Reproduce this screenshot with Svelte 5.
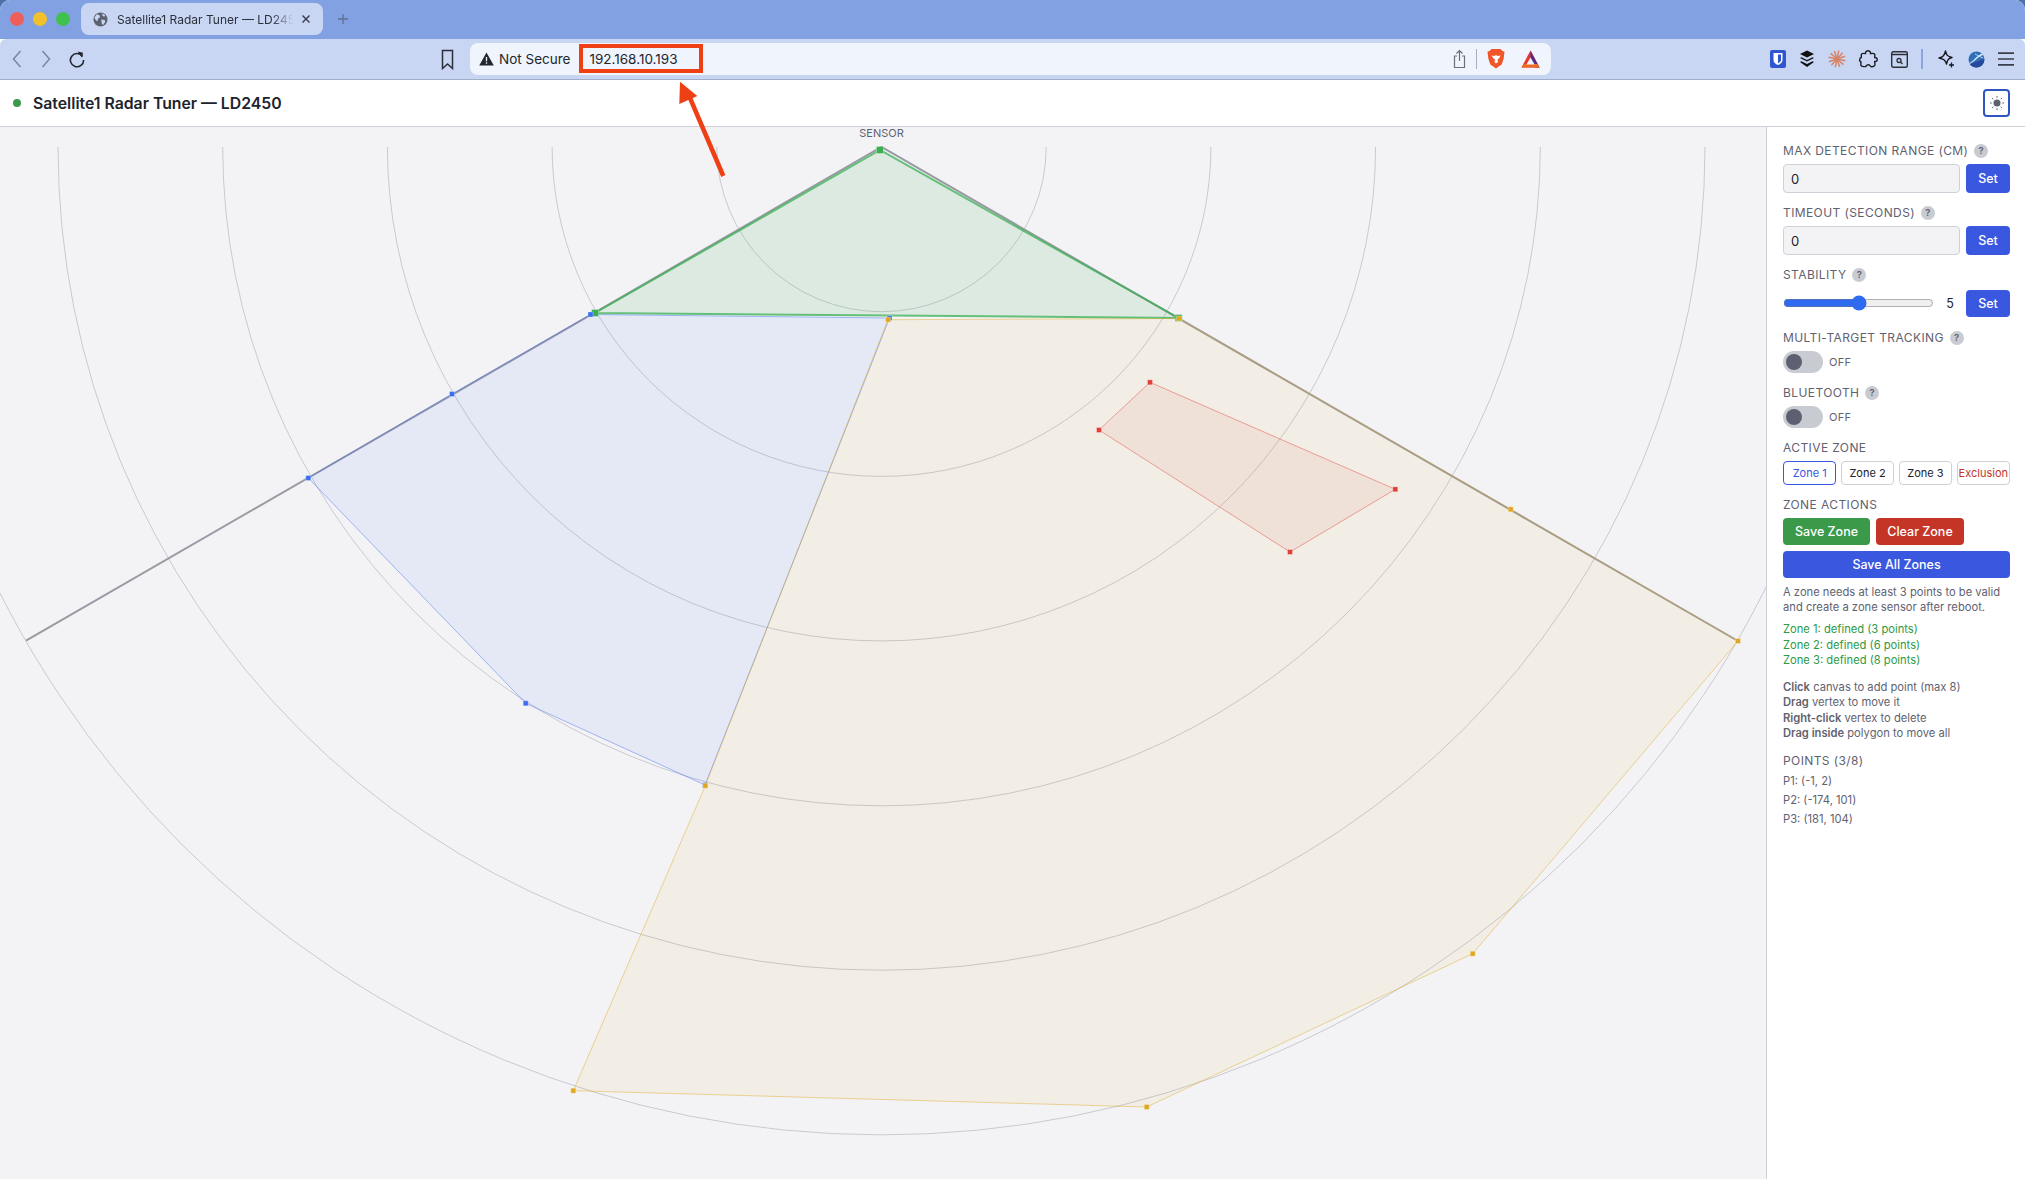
<script lang="ts">
	const cx = 881.5;
	const cy = 147;
	const rings = [1, 2, 3, 4, 5, 6].map((k) => k * 164.7);

	const zones = [
		{
			color: '#38b050',
			fill: 0.12,
			stroke: 2,
			strokeAlpha: 0.75,
			size: 7,
			points: [[880, 150], [595, 313], [1178.7, 318]]
		},
		{
			color: '#3b6ef0',
			fill: 0.08,
			stroke: 1,
			strokeAlpha: 0.45,
			size: 5,
			points: [[590.5, 314.5], [452, 394], [308.3, 478], [525.7, 703.3], [705, 785], [889.5, 318]]
		},
		{
			color: '#e0a820',
			fill: 0.08,
			stroke: 1,
			strokeAlpha: 0.45,
			size: 5,
			points: [[888, 319.7], [1179, 318.5], [1510.7, 509.3], [1738, 641], [1472.7, 953.7], [1146.7, 1107], [573.3, 1090.7], [705.3, 785.7]]
		},
		{
			color: '#e04038',
			fill: 0.07,
			stroke: 1,
			strokeAlpha: 0.45,
			size: 5,
			points: [[1150, 382.3], [1395.3, 489.3], [1290, 552], [1099, 430]]
		}
	];

	const pointsAttr = (pts: number[][]) => pts.map((p) => p.join(',')).join(' ');

	let activeZone = $state('Zone 1');
	const zoneTabs = ['Zone 1', 'Zone 2', 'Zone 3', 'Exclusion'];
	const burst = Array.from({ length: 12 }, (_, i) => (i * Math.PI) / 6);
	const sunRays = Array.from({ length: 8 }, (_, i) => (i * Math.PI) / 4);
</script>

<div class="window">
	<div class="tabbar">
		<div class="lights">
			<span class="light red"></span>
			<span class="light yellow"></span>
			<span class="light green"></span>
		</div>
		<div class="tab">
			<svg width="15" height="15" viewBox="0 0 16 16" class="favicon">
				<circle cx="8" cy="8" r="7.5" fill="#5c6270" />
				<path d="M4 2.5l3 1 .5 2-2 1.5-1 3-2-2-1-2zM9 8l3.5.5.5 2-2 3-1.5-.5-.5-3zM10 1.5l3 2-1 1.5-2-1z" fill="#c8d6f3" />
			</svg>
			<span class="tab-title">Satellite1 Radar Tuner — LD2450</span>
			<svg width="10" height="10" viewBox="0 0 10 10" class="tab-close">
				<path d="M1.5 1.5l7 7M8.5 1.5l-7 7" stroke="#333a48" stroke-width="1.4" fill="none" />
			</svg>
		</div>
		<svg width="12" height="12" viewBox="0 0 12 12" class="newtab">
			<path d="M6 1v10M1 6h10" stroke="#5f6f94" stroke-width="1.3" />
		</svg>
	</div>

	<div class="toolbar">
		<div class="nav">
			<svg width="12" height="20" viewBox="0 0 12 20"><path d="M9.5 2L2.5 10l7 8" stroke="#7c8698" stroke-width="1.5" fill="none" /></svg>
			<svg width="12" height="20" viewBox="0 0 12 20"><path d="M2.5 2l7 8-7 8" stroke="#7c8698" stroke-width="1.5" fill="none" /></svg>
			<svg width="18" height="18" viewBox="0 0 18 18">
				<path d="M14.5 6.5A6.6 6.6 0 1 0 15.6 10" stroke="#22262e" stroke-width="1.6" fill="none" />
				<path d="M9.8 1.6l5.2 1.2-1 5z" fill="#22262e" />
			</svg>
		</div>
		<svg width="13" height="21" viewBox="0 0 13 21" class="bookmark">
			<path d="M1.5 1.5h10v18l-5-4.5-5 4.5z" stroke="#2a2f3a" stroke-width="1.5" fill="none" />
		</svg>
		<div class="urlbar">
			<svg width="15" height="14" viewBox="0 0 15 14">
				<path d="M7.5 .5L14.8 13.5H.2z" fill="#22262e" />
				<path d="M7.5 5v4.2M7.5 10.3v1.4" stroke="#f0f4fc" stroke-width="1.3" />
			</svg>
			<span class="secure">Not Secure</span>
			<span class="address">192.168.10.193</span>
			<div class="url-actions">
				<svg width="13" height="20" viewBox="0 0 13 20">
					<path d="M4 7H1.5v11.5h10V7H9M6.5 12V1.5M3.5 4.5l3-3 3 3" stroke="#6b7078" stroke-width="1.2" fill="none" />
				</svg>
				<span class="url-sep"></span>
				<svg width="18" height="21" viewBox="0 0 18 21" class="brave">
					<path d="M4.5 1h9l2 2 2 .5-.8 7-2 6L9 20.5 3.3 16.5l-2-6-.8-7L2.5 3z" fill="#f0562a" />
					<path d="M4.5 7.5L7.5 8 9 7l1.5 1 3-.5-1.5 3-1.5 1 .5 2.5L9 15.5 7.500 14l.5-2.500-1.500-1z" fill="#fff" />
				</svg>
				<svg width="19" height="18" viewBox="0 0 19 18" class="bat">
					<path d="M9.5 .5L18.5 17.5H.5z" fill="#e5372d" />
					<path d="M9.5 .5L18.5 17.5H14L9.5 9z" fill="#5b2a86" />
					<path d="M.5 17.5h18L16.5 14h-14z" fill="#ee6a1f" />
					<path d="M9.5 7.5L13.6 14.5H5.4z" fill="#f0f4fc" />
				</svg>
			</div>
		</div>
		<div class="extensions">
			<svg class="ext-bitwarden" width="16" height="18" viewBox="0 0 16 18">
				<rect width="16" height="18" rx="2" fill="#2f55d0" />
				<path d="M3.5 3h9v7c0 2.5-2 4-4.5 5-2.5-1-4.5-2.5-4.5-5z" fill="#fff" />
				<path d="M8 4.5h3V10c0 1.5-1.500 2.500-3 3.200z" fill="#2f55d0" />
			</svg>
			<svg class="ext-buffer" width="16" height="18" viewBox="0 0 16 18">
				<path d="M8 .5l7 3.5-7 3.5L1 4z" fill="#111" />
				<path d="M2.5 7.200L8 10l5.500-2.800L15 8l-7 3.500L1 8z" fill="#111" />
				<path d="M2.5 11.200L8 14l5.500-2.800L15 12l-7 5-7-5z" fill="#111" />
			</svg>
			<svg class="ext-burst" width="18" height="18" viewBox="0 0 18 18">
				{#each burst as a}
					<line x1="9" y1="9" x2={9 + 8.5 * Math.cos(a + 0.2)} y2={9 + 8.5 * Math.sin(a + 0.2)} stroke="#d88468" stroke-width="1.5" />
				{/each}
			</svg>
			<svg class="ext-puzzle" width="19" height="19" viewBox="0 0 19 19">
				<path d="M6.5 3.5C6.300 1.500 8 .8 9 .8s2.700.7 2.500 2.700c1.500 0 3.200-.5 4 .5s0 2.500.2 3.500c2 0 2.800 1.200 2.500 2.500s-1.500 1.700-2.500 1.500c-.2 1.500.8 3 0 4s-2.700 1.300-4 1c-.8-1.500-1.700-1.700-2.500-1.700s-2 1-2.500 1.700c-1.500.2-3.500.3-4.500-.7s0-2.500-.2-3.800C.5 11.500.5 10 .8 9s1.200-1.500 1.500-1.500c.2-1-.3-2.500.2-3.300s2.500-.9 4-.7z" stroke="#1d2028" stroke-width="1.4" fill="none" />
			</svg>
			<svg class="ext-search" width="17" height="17" viewBox="0 0 17 17">
				<rect x=".7" y=".7" width="15.6" height="15.6" rx="1.5" stroke="#2c3038" stroke-width="1.4" fill="none" />
				<path d="M1 3.5h15" stroke="#2c3038" stroke-width="1.4" />
				<circle cx="8" cy="9.5" r="2" stroke="#2c3038" stroke-width="1.3" fill="none" />
				<path d="M9.5 11l2 2" stroke="#2c3038" stroke-width="1.4" />
			</svg>
			<span class="ext-sep"></span>
			<svg class="ext-sparkle" width="17" height="18" viewBox="0 0 17 18">
				<path d="M7.5 1c.8 4 2 5.500 6.500 6.500-3.500.8-4.500 2-5.500 6.500C7.500 10.200 6 9 1 8c4.200-1 5.500-2.500 6.500-7z" stroke="#14171d" stroke-width="1.4" fill="none" stroke-linejoin="round" />
				<path d="M13.5 12.5v5M11 15h5" stroke="#14171d" stroke-width="1.3" />
			</svg>
			<svg class="ext-globe" width="17" height="17" viewBox="0 0 17 17">
				<circle cx="8.5" cy="8.5" r="8" fill="#2f6fb8" />
				<path d="M1 12C5 11 8 5 14 2.500c.5.300 1 .8 1.200 1.300C10 6 6 11 1.800 13z" fill="#d6e6f4" />
				<path d="M1.800 13C7 12 10 9 16.300 8.500c0 4-3.500 8-7.800 8-3 0-5.500-1.500-6.700-3.500z" fill="#26479c" />
				<path d="M7 3c2 1 4 2.500 8 4" stroke="#d6e6f4" stroke-width=".8" fill="none" />
			</svg>
			<svg class="ext-menu" width="16" height="14" viewBox="0 0 16 14">
				<path d="M0 1.200h16M0 7h16M0 12.800h16" stroke="#3a3f4a" stroke-width="1.7" />
			</svg>
		</div>
	</div>

	<header class="topbar">
		<span class="status-dot"></span>
		<h1>Satellite1 Radar Tuner — LD2450</h1>
		<button class="theme" aria-label="Toggle theme">
			<svg width="16" height="16" viewBox="0 0 16 16">
				<circle cx="8" cy="8" r="3.5" fill="#5c6270" />
				{#each sunRays as a}
					<line x1={8 + 5.3 * Math.cos(a)} y1={8 + 5.3 * Math.sin(a)} x2={8 + 7 * Math.cos(a)} y2={8 + 7 * Math.sin(a)} stroke="#5c6270" stroke-width="1" />
				{/each}
			</svg>
		</button>
	</header>

	<main class="content">
		<div class="radar">
			<svg width="1766" height="1052" viewBox="0 127 1766 1052">
				<text x={cx} y="136.5" text-anchor="middle" class="sensor">SENSOR</text>
				{#each rings as r}
					<path d="M{cx - r} {cy} A{r} {r} 0 0 0 {cx + r} {cy}" fill="none" stroke="#c9cad1" stroke-width="1" />
				{/each}
				<path d="M26 640.7L{cx} {cy}L1738 641" fill="none" stroke="#999aa3" stroke-width="2" />
				{#each zones as z}
					<polygon
						points={pointsAttr(z.points)}
						fill={z.color}
						fill-opacity={z.fill}
						stroke={z.color}
						stroke-opacity={z.strokeAlpha}
						stroke-width={z.stroke}
					/>
				{/each}
				{#each zones as z}
					{#each z.points as p}
						<rect
							x={p[0] - z.size / 2}
							y={p[1] - z.size / 2}
							width={z.size}
							height={z.size}
							fill={z.color}
							stroke="#fff"
							stroke-opacity="0.3"
							stroke-width="1"
						/>
					{/each}
				{/each}
			</svg>
		</div>

		<aside class="panel">
			<div class="label">Max Detection Range (cm) <span class="help">?</span></div>
			<div class="row">
				<input class="num" type="text" value="0" />
				<button class="btn blue set">Set</button>
			</div>

			<div class="label">Timeout (seconds) <span class="help">?</span></div>
			<div class="row">
				<input class="num" type="text" value="0" />
				<button class="btn blue set">Set</button>
			</div>

			<div class="label">Stability <span class="help">?</span></div>
			<div class="row slider-row">
				<input class="slider" type="range" min="0" max="10" value="5" />
				<span class="slider-value">5</span>
				<button class="btn blue set short">Set</button>
			</div>

			<div class="label">Multi-Target Tracking <span class="help">?</span></div>
			<div class="toggle-row">
				<span class="toggle"><span class="knob"></span></span>
				<span class="toggle-text">OFF</span>
			</div>

			<div class="label">Bluetooth <span class="help">?</span></div>
			<div class="toggle-row">
				<span class="toggle"><span class="knob"></span></span>
				<span class="toggle-text">OFF</span>
			</div>

			<div class="label">Active Zone</div>
			<div class="zone-tabs">
				{#each zoneTabs as tab}
					<button
						class="zone-tab"
						class:active={activeZone === tab}
						class:exclusion={tab === 'Exclusion'}
						onclick={() => (activeZone = tab)}>{tab}</button
					>
				{/each}
			</div>

			<div class="label">Zone Actions</div>
			<div class="actions">
				<button class="btn green save">Save Zone</button>
				<button class="btn red clear">Clear Zone</button>
			</div>
			<button class="btn blue all">Save All Zones</button>

			<p class="hint">A zone needs at least 3 points to be valid and create a zone sensor after reboot.</p>

			<div class="defined">
				<div>Zone 1: defined (3 points)</div>
				<div>Zone 2: defined (6 points)</div>
				<div>Zone 3: defined (8 points)</div>
			</div>

			<div class="instructions">
				<div><b>Click</b> canvas to add point (max 8)</div>
				<div><b>Drag</b> vertex to move it</div>
				<div><b>Right-click</b> vertex to delete</div>
				<div><b>Drag inside</b> polygon to move all</div>
			</div>

			<div class="label points-label">Points (3/8)</div>
			<div class="points">
				<div>P1: (-1, 2)</div>
				<div>P2: (-174, 101)</div>
				<div>P3: (181, 104)</div>
			</div>
		</aside>
	</main>

	<!-- red callout drawn over the screenshot -->
	<div class="callout-box"></div>
	<svg class="callout-arrow" width="60" height="110" viewBox="670 75 60 110">
		<path d="M723.3 176L690 98" stroke="#ee3f15" stroke-width="4.5" fill="none" />
		<path d="M680 81.7L679.3 104L697.3 96z" fill="#ee3f15" />
	</svg>
</div>

<style>
	:global(body) {
		margin: 0;
		background: #4a72a8;
	}
	.window {
		position: relative;
		width: 2025px;
		height: 1179px;
		overflow: hidden;
		display: flex;
		flex-direction: column;
		font-family: Inter, 'Liberation Sans', sans-serif;
		background: #fff;
		border-radius: 10px 10px 0 0;
	}
	.tabbar {
		height: 39px;
		flex: none;
		background: #82a1e2;
		display: flex;
		align-items: flex-start;
		box-sizing: border-box;
		padding-left: 10px;
	}
	.lights {
		display: flex;
		gap: 9px;
		margin-top: 12px;
	}
	.light {
		width: 14px;
		height: 14px;
		border-radius: 50%;
	}
	.light.red {
		background: #ee5f5b;
	}
	.light.yellow {
		background: #f1c02a;
	}
	.light.green {
		background: #3fc04f;
	}
	.tab {
		margin: 3px 0 0 11px;
		width: 242px;
		height: 32px;
		box-sizing: border-box;
		background: #c8d6f3;
		border-radius: 8px;
		display: flex;
		align-items: center;
		padding-left: 12px;
	}
	.tab-title {
		margin-left: 9px;
		width: 176px;
		white-space: nowrap;
		overflow: hidden;
		font-size: 12px;
		color: #2a2f3a;
		mask-image: linear-gradient(90deg, #000 88%, transparent);
	}
	.tab-close {
		margin-left: 8px;
	}
	.newtab {
		margin: 13px 0 0 14px;
	}
	.toolbar {
		height: 41px;
		flex: none;
		box-sizing: border-box;
		background: #c8d6f3;
		border-bottom: 1px solid #a0aec8;
		border-radius: 6px 6px 0 0;
		display: flex;
		align-items: center;
		padding-right: 11px;
	}
	.nav {
		display: flex;
		align-items: center;
		gap: 17px;
		padding-left: 11px;
		width: 441px;
		box-sizing: border-box;
	}
	.nav svg:last-child {
		margin-left: -1px;
	}
	.bookmark {
		margin-right: 16px;
	}
	.urlbar {
		width: 1081px;
		height: 32px;
		box-sizing: border-box;
		background: #f0f4fc;
		border-radius: 8px;
		display: flex;
		align-items: center;
		padding-left: 9px;
		margin-top: -1px;
	}
	.secure {
		margin-left: 5px;
		font-size: 13.5px;
		color: #22262e;
	}
	.address {
		margin-left: 19px;
		font-size: 13.5px;
		color: #22262e;
	}
	.url-actions {
		margin-left: auto;
		display: flex;
		align-items: center;
		padding-right: 11px;
	}
	.url-sep {
		width: 1px;
		height: 20px;
		background: #aab0ba;
		margin: 0 10px;
	}
	.bat {
		margin-left: 16px;
	}
	.extensions {
		margin-left: auto;
		display: flex;
		align-items: center;
		gap: 13px;
	}
	.ext-sep {
		width: 2px;
		height: 20px;
		background: #8ba6de;
		margin: 0 2px 0 0;
	}
	.topbar {
		height: 47px;
		flex: none;
		box-sizing: border-box;
		border-bottom: 1px solid #cfd0d8;
		display: flex;
		align-items: center;
		padding: 0 15px 0 13px;
		background: #fff;
	}
	.status-dot {
		width: 8px;
		height: 8px;
		border-radius: 50%;
		background: #3a9a4a;
	}
	h1 {
		margin: 0 0 0 12px;
		font-size: 15.8px;
		font-weight: 600;
		color: #20232c;
	}
	.theme {
		margin-left: auto;
		width: 27px;
		height: 28px;
		padding: 0;
		background: #fff;
		border: 2px solid #2f55c0;
		border-radius: 4px;
		display: flex;
		align-items: center;
		justify-content: center;
	}
	.content {
		flex: 1;
		display: flex;
		min-height: 0;
	}
	.radar {
		width: 1766px;
		flex: none;
		background: #f3f3f6;
	}
	.radar svg {
		display: block;
	}
	.sensor {
		font-size: 11px;
		fill: #5f6270;
	}
	.panel {
		flex: 1;
		box-sizing: border-box;
		border-left: 1px solid #cfd0d8;
		padding: 16px 15px 0 16px;
		background: #fff;
		font-size: 11.2px;
		color: #5f6270;
	}
	.label {
		height: 16px;
		line-height: 16px;
		font-size: 12px;
		letter-spacing: 0.4px;
		text-transform: uppercase;
		color: #5f6270;
		white-space: nowrap;
	}
	.help {
		display: inline-block;
		width: 14px;
		height: 14px;
		margin-left: 2px;
		border-radius: 50%;
		background: #c9cbd3;
		font-size: 9.5px;
		line-height: 14px;
		text-align: center;
		letter-spacing: 0;
		font-weight: 600;
		vertical-align: 1px;
	}
	.row {
		display: flex;
		align-items: center;
		gap: 6px;
		margin: 5px 0 12px;
	}
	.num {
		width: 177px;
		height: 29px;
		box-sizing: border-box;
		margin: 0;
		padding: 0 7px;
		background: #f3f3f6;
		border: 1px solid #cfd0d8;
		border-radius: 4px;
		font: 13px Inter, sans-serif;
		color: #20232c;
		outline: none;
	}
	.btn {
		border: 0;
		border-radius: 4px;
		color: #fff;
		font: 500 12.5px Inter, sans-serif;
		padding: 0;
		height: 27px;
	}
	.blue {
		background: #3a57e0;
	}
	.green {
		background: #3a9a4a;
	}
	.red {
		background: #c43528;
	}
	.set {
		width: 44px;
		height: 29px;
		flex: none;
	}
	.set.short {
		height: 27px;
	}
	.slider-row {
		gap: 0;
		margin-top: 7px;
		margin-bottom: 13px;
	}
	.slider {
		width: 151px;
		height: 16px;
		margin: -1px 0 0;
		accent-color: #2f6bf0;
	}
	.slider-value {
		width: 32px;
		text-align: center;
		font-size: 12.5px;
		color: #20232c;
	}
	.toggle-row {
		display: flex;
		align-items: center;
		gap: 6px;
		margin: 5px 0 12px;
	}
	.toggle {
		width: 40px;
		height: 22px;
		border-radius: 11px;
		background: #c9cbd3;
		display: flex;
		align-items: center;
		padding-left: 3px;
		box-sizing: border-box;
	}
	.knob {
		width: 16px;
		height: 16px;
		border-radius: 50%;
		background: #5c6070;
	}
	.toggle-text {
		font-size: 11px;
		letter-spacing: 0.03em;
	}
	.zone-tabs {
		display: grid;
		grid-template-columns: repeat(4, 1fr);
		gap: 4.5px;
		margin: 5px 0 12px;
	}
	.zone-tab {
		height: 23.5px;
		padding: 0;
		background: #fff;
		border: 1px solid #cfd0d8;
		border-radius: 4px;
		font: 11px Inter, sans-serif;
		color: #20232c;
		overflow: hidden;
		white-space: nowrap;
	}
	.zone-tab.active {
		color: #3a57e0;
		border-color: #3a57e0;
	}
	.zone-tab.exclusion {
		color: #c43528;
	}
	.actions {
		display: flex;
		gap: 6px;
		margin: 5px 0 6px;
	}
	.save {
		width: 87px;
	}
	.clear {
		width: 88px;
	}
	.all {
		display: block;
		width: 100%;
	}
	.hint {
		margin: 7px 0;
		line-height: 15.4px;
	}
	.defined {
		color: #2e9a45;
		line-height: 15.5px;
	}
	.instructions {
		margin-top: 11px;
		line-height: 15.4px;
	}
	.instructions b {
		font-weight: 600;
	}
	.points-label {
		margin-top: 12px;
	}
	.points {
		margin-top: 3px;
		line-height: 19px;
	}
	.callout-box {
		position: absolute;
		left: 579px;
		top: 44px;
		width: 124px;
		height: 29px;
		box-sizing: border-box;
		border: 4px solid #ee3f15;
	}
	.callout-arrow {
		position: absolute;
		left: 670px;
		top: 75px;
	}
</style>
